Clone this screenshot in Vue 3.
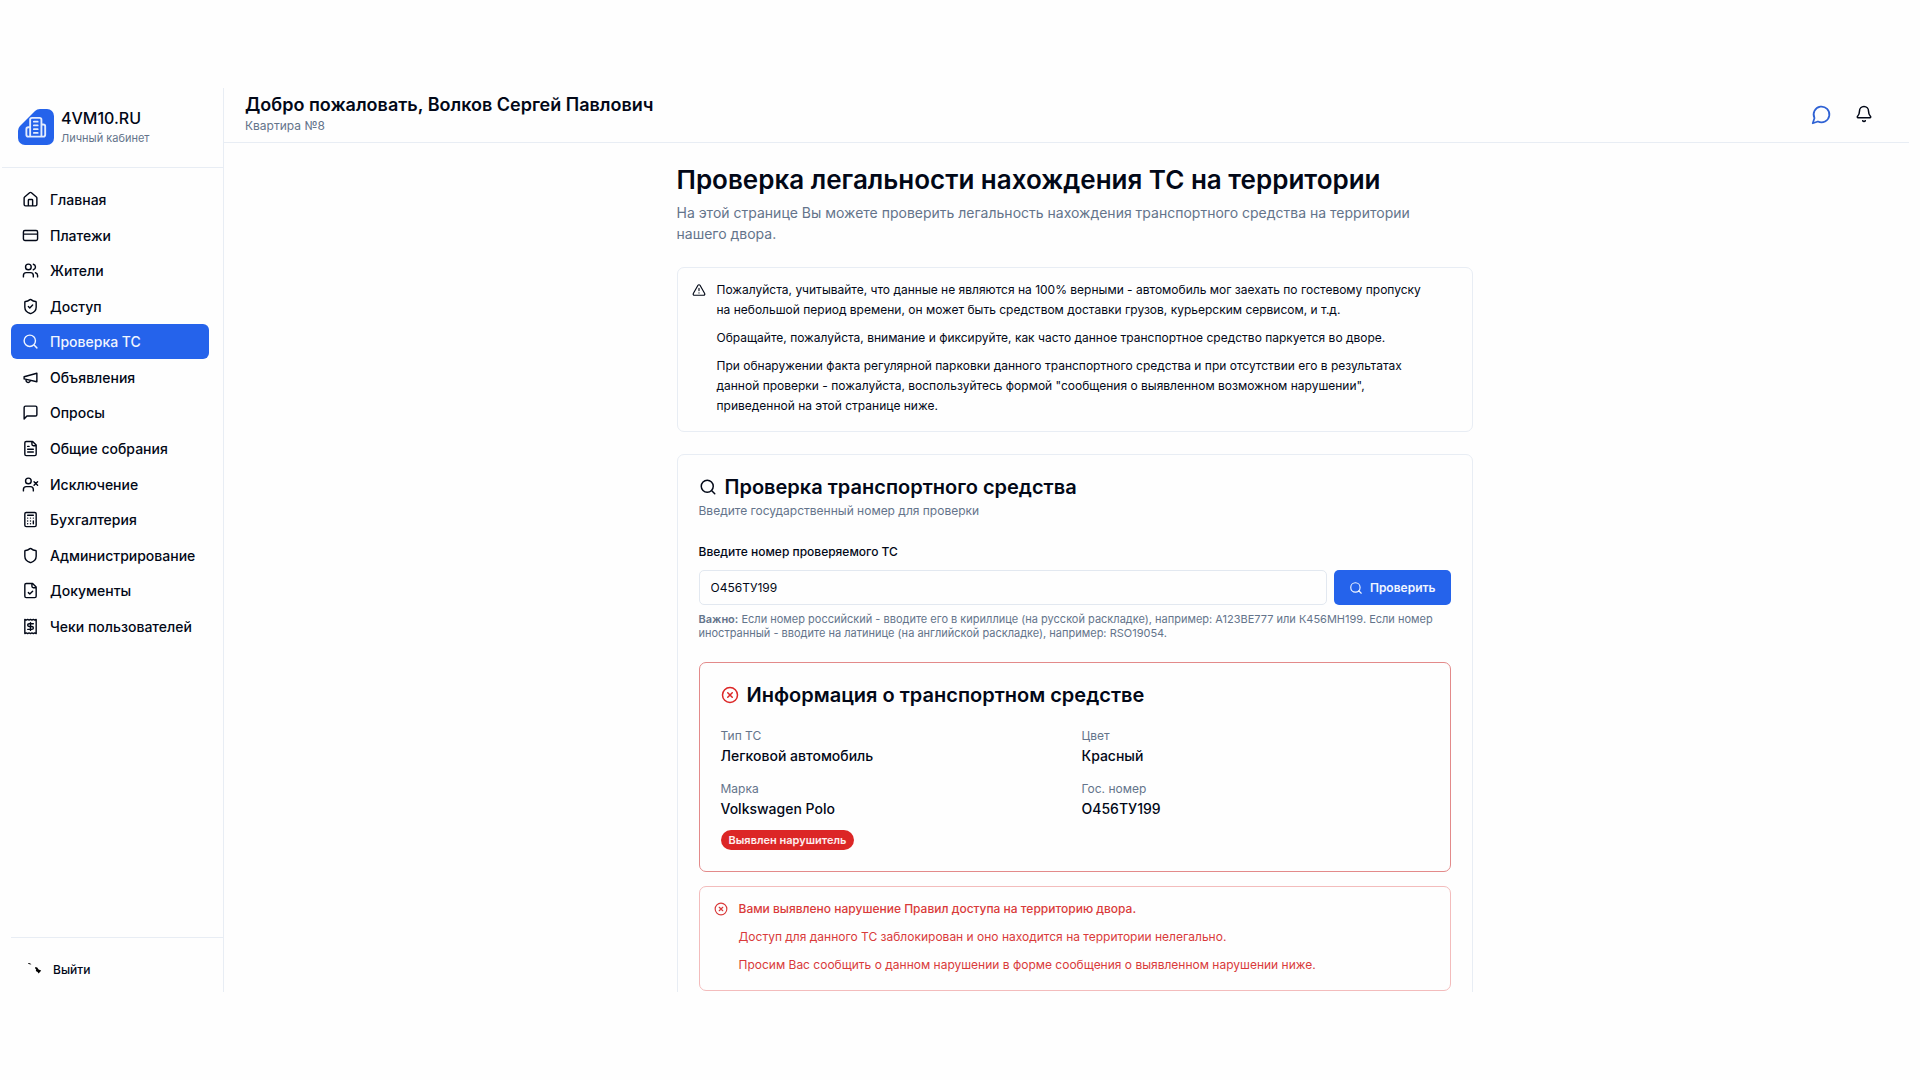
<template>
  <div class="app">
    <aside class="sidebar">
      <div class="brand">
        <svg class="brand-logo" viewBox="0 0 36 36" aria-hidden="true">
          <path class="brand-shape" d="M22 0H29A7 7 0 0 1 36 7V29A7 7 0 0 1 29 36H7A7 7 0 0 1 0 29V22Q0 19 2 17L17 2Q19 0 22 0Z" />
          <g class="brand-glyph" transform="translate(6.500 7) scale(.94)">
            <path :d="icons.building" />
          </g>
        </svg>
        <div>
          <div class="brand-name">4VM10.RU</div>
          <div class="brand-sub">Личный кабинет</div>
        </div>
      </div>

      <nav class="nav">
        <a
          v-for="item in menu"
          :key="item.label"
          href="#"
          class="nav-item"
          :class="{ active: item.label === activeItem }"
          @click.prevent="activeItem = item.label"
        >
          <svg class="icon nav-icon" viewBox="0 0 24 24" aria-hidden="true"><path :d="icons[item.icon]" /></svg>
          {{ item.label }}
        </a>
      </nav>

      <div class="sidebar-footer">
        <button type="button" class="logout">
          <svg class="logout-icon" viewBox="0 0 16 16" aria-hidden="true">
            <path d="M2 1l2 .2 1.500 1.200-2-.2-1.500-.6zM9.200 5l2 .6 1.400 1.800 2.600 1.200-1 1.200-1.600 1.800-1-1.600-1.800-1 .4-1.400-1-1.200z" />
          </svg>
          Выйти
        </button>
      </div>
    </aside>

    <div class="main">
      <header class="topbar">
        <div>
          <div class="welcome">Добро пожаловать, Волков Сергей Павлович</div>
          <div class="flat">Квартира №8</div>
        </div>
        <div class="topbar-actions">
          <button type="button" class="icon-btn chat" aria-label="Сообщения">
            <svg class="icon" viewBox="0 0 24 24"><path :d="icons.chat" /></svg>
          </button>
          <button type="button" class="icon-btn bell" aria-label="Уведомления">
            <svg class="icon" viewBox="0 0 24 24"><path :d="icons.bell" /></svg>
          </button>
        </div>
      </header>

      <main class="content">
        <div class="page">
          <h1>Проверка легальности нахождения ТС на территории</h1>
          <p class="lead">
            На этой странице Вы можете проверить легальность нахождения транспортного средства на территории нашего двора.
          </p>

          <section class="notice">
            <svg class="icon notice-icon" viewBox="0 0 24 24" aria-hidden="true"><path :d="icons.warning" /></svg>
            <div class="notice-text">
              <p v-for="text in notes" :key="text">{{ text }}</p>
            </div>
          </section>

          <section class="card">
            <h2>
              <svg class="icon title-icon" viewBox="0 0 24 24" aria-hidden="true"><path :d="icons.search" /></svg>
              Проверка транспортного средства
            </h2>
            <p class="card-sub">Введите государственный номер для проверки</p>

            <form @submit.prevent>
              <label class="field-label" for="plate">Введите номер проверяемого ТС</label>
              <div class="field-row">
                <input id="plate" v-model="plate" type="text" />
                <button type="submit" class="check-btn">
                  <svg class="icon" viewBox="0 0 24 24" aria-hidden="true"><path :d="icons.search" /></svg>
                  Проверить
                </button>
              </div>
            </form>
            <p class="hint">
              <strong>Важно:</strong> Если номер российский - вводите его в кириллице (на русской раскладке), например:
              А123ВЕ777 или К456МН199. Если номер иностранный - вводите на латинице (на английской раскладке), например: RSO19054.
            </p>

            <div class="result">
              <h2>
                <svg class="icon title-icon danger" viewBox="0 0 24 24" aria-hidden="true"><path :d="icons.cross" /></svg>
                Информация о транспортном средстве
              </h2>
              <dl class="facts">
                <div v-for="fact in facts" :key="fact.label">
                  <dt>{{ fact.label }}</dt>
                  <dd>{{ fact.value }}</dd>
                </div>
              </dl>
              <span class="badge">Выявлен нарушитель</span>
            </div>

            <div class="notice violation">
              <svg class="icon notice-icon" viewBox="0 0 24 24" aria-hidden="true"><path :d="icons.cross" /></svg>
              <div class="notice-text">
                <p class="strong">Вами выявлено нарушение Правил доступа на территорию двора.</p>
                <p>Доступ для данного ТС заблокирован и оно находится на территории нелегально.</p>
                <p>Просим Вас сообщить о данном нарушении в форме сообщения о выявленном нарушении ниже.</p>
              </div>
            </div>
          </section>
        </div>
      </main>
    </div>
  </div>
</template>

<script setup>
import { ref } from 'vue'

const activeItem = ref('Проверка ТС')
const plate = ref('О456ТУ199')

const menu = [
  { label: 'Главная', icon: 'home' },
  { label: 'Платежи', icon: 'card' },
  { label: 'Жители', icon: 'users' },
  { label: 'Доступ', icon: 'shieldCheck' },
  { label: 'Проверка ТС', icon: 'search' },
  { label: 'Объявления', icon: 'megaphone' },
  { label: 'Опросы', icon: 'message' },
  { label: 'Общие собрания', icon: 'fileText' },
  { label: 'Исключение', icon: 'userX' },
  { label: 'Бухгалтерия', icon: 'calculator' },
  { label: 'Администрирование', icon: 'shield' },
  { label: 'Документы', icon: 'fileCheck' },
  { label: 'Чеки пользователей', icon: 'receipt' }
]

const notes = [
  'Пожалуйста, учитывайте, что данные не являются на 100% верными - автомобиль мог заехать по гостевому пропуску на небольшой период времени, он может быть средством доставки грузов, курьерским сервисом, и т.д.',
  'Обращайте, пожалуйста, внимание и фиксируйте, как часто данное транспортное средство паркуется во дворе.',
  'При обнаружении факта регулярной парковки данного транспортного средства и при отсутствии его в результатах данной проверки - пожалуйста, воспользуйтесь формой "сообщения о выявленном возможном нарушении", приведенной на этой странице ниже.'
]

const facts = [
  { label: 'Тип ТС', value: 'Легковой автомобиль' },
  { label: 'Цвет', value: 'Красный' },
  { label: 'Марка', value: 'Volkswagen Polo' },
  { label: 'Гос. номер', value: 'О456ТУ199' }
]

const shieldPath = 'M20 13c0 5-3.5 7.500-7.660 8.950a1 1 0 0 1-.67-.01C7.500 20.500 4 18 4 13V6a1 1 0 0 1 1-1c2 0 4.500-1.200 6.240-2.720a1.170 1.170 0 0 1 1.520 0C14.510 3.810 17 5 19 5a1 1 0 0 1 1 1z'
const filePath = 'M15 2H6a2 2 0 0 0-2 2v16a2 2 0 0 0 2 2h12a2 2 0 0 0 2-2V7zM14 2v4a2 2 0 0 0 2 2h4'

const icons = {
  building: 'M6 22V4a2 2 0 0 1 2-2h8a2 2 0 0 1 2 2v18ZM6 12H4a2 2 0 0 0-2 2v6a2 2 0 0 0 2 2h2M18 9h2a2 2 0 0 1 2 2v9a2 2 0 0 1-2 2h-2M10 6h4M10 10h4M10 14h4M10 18h4',
  home: 'M15 21v-8a1 1 0 0 0-1-1h-4a1 1 0 0 0-1 1v8M3 10a2 2 0 0 1 .709-1.528l7-5.999a2 2 0 0 1 2.582 0l7 5.999A2 2 0 0 1 21 10v9a2 2 0 0 1-2 2H5a2 2 0 0 1-2-2z',
  card: 'M4 5h16a2 2 0 0 1 2 2v10a2 2 0 0 1-2 2H4a2 2 0 0 1-2-2V7a2 2 0 0 1 2-2zM2 10h20',
  users: 'M16 21v-2a4 4 0 0 0-4-4H6a4 4 0 0 0-4 4v2M13 7a4 4 0 1 1-8 0a4 4 0 1 1 8 0M22 21v-2a4 4 0 0 0-3-3.870M16 3.130a4 4 0 0 1 0 7.750',
  shield: shieldPath,
  shieldCheck: shieldPath + 'M9 12l2 2 4-4',
  search: 'M19 11a8 8 0 1 1-16 0a8 8 0 1 1 16 0M21 21l-4.300-4.300',
  megaphone: 'M3 11l18-5v12L3 14v-3zM11.600 16.800a3 3 0 1 1-5.800-1.600',
  message: 'M21 15a2 2 0 0 1-2 2H7l-4 4V5a2 2 0 0 1 2-2h14a2 2 0 0 1 2 2z',
  fileText: filePath + 'M10 9H8M16 13H8M16 17H8',
  userX: 'M16 21v-2a4 4 0 0 0-4-4H6a4 4 0 0 0-4 4v2M13 7a4 4 0 1 1-8 0a4 4 0 1 1 8 0M17 8l5 5M22 8l-5 5',
  calculator: 'M6 2h12a2 2 0 0 1 2 2v16a2 2 0 0 1-2 2H6a2 2 0 0 1-2-2V4a2 2 0 0 1 2-2zM8 6h8M16 14v4M16 10h.01M12 10h.01M8 10h.01M12 14h.01M8 14h.01M12 18h.01M8 18h.01',
  fileCheck: filePath + 'M9 15l2 2 4-4',
  receipt: 'M4 2v20l2-1 2 1 2-1 2 1 2-1 2 1 2-1 2 1V2l-2 1-2-1-2 1-2-1-2 1-2-1-2 1ZM16 8h-6a2 2 0 1 0 0 4h4a2 2 0 1 1 0 4H8M12 17.500v-11',
  chat: 'M7.900 20A9 9 0 1 0 4 16.100L2 22Z',
  bell: 'M10.268 21a2 2 0 0 0 3.464 0M3.262 15.326A1 1 0 0 0 4 17h16a1 1 0 0 0 .74-1.673C19.410 13.956 18 12.499 18 8A6 6 0 0 0 6 8c0 4.499-1.411 5.956-2.738 7.326',
  warning: 'M21.730 18l-8-14a2 2 0 0 0-3.480 0l-8 14A2 2 0 0 0 4 21h16a2 2 0 0 0 1.730-3M12 9v4M12 17h.01',
  cross: 'M22 12a10 10 0 1 1-20 0a10 10 0 1 1 20 0M15 9l-6 6M9 9l6 6'
}
</script>

<style>
body {
  margin: 0;
  background: #fefefe;
}
</style>

<style scoped>
.app {
  display: flex;
  height: 100vh;
  padding: 88px 11px 88px 0;
  box-sizing: border-box;
  font-family: Inter, "Liberation Sans", sans-serif;
  color: #020817;
}

h1,
h2,
p,
dl,
dd {
  margin: 0;
}

button,
input {
  font-family: inherit;
}

button {
  border: none;
  background: none;
  padding: 0;
  cursor: pointer;
}

.icon {
  fill: none;
  stroke: currentColor;
  stroke-width: 2;
  stroke-linecap: round;
  stroke-linejoin: round;
  flex-shrink: 0;
}

/* Sidebar */
.sidebar {
  display: flex;
  flex-direction: column;
  width: 224px;
  flex-shrink: 0;
  box-sizing: border-box;
  border-right: 1px solid #e8edf4;
}

.brand {
  display: flex;
  align-items: center;
  gap: 7px;
  height: 80px;
  box-sizing: border-box;
  margin-left: 2px;
  padding: 0 16px 2px;
  border-bottom: 1px solid #e8edf4;
}

.brand-logo {
  width: 36px;
  height: 36px;
}

.brand-shape {
  fill: #2563eb;
}

.brand-glyph {
  fill: none;
  stroke: #e3ecfd;
  stroke-width: 2;
  stroke-linecap: round;
  stroke-linejoin: round;
}

.brand-name {
  font-size: 16px;
  line-height: 22px;
  font-weight: 500;
}

.brand-sub {
  font-size: 11px;
  line-height: 18px;
  color: #64748b;
}

.nav {
  display: flex;
  flex-direction: column;
  justify-content: space-between;
  min-height: 462px;
  padding: 14px 14px 0 11px;
}

.nav-item {
  display: flex;
  align-items: center;
  gap: 11px;
  height: 35px;
  padding: 0 11px;
  border-radius: 6px;
  font-size: 14px;
  font-weight: 500;
  color: inherit;
  text-decoration: none;
  white-space: nowrap;
}

.nav-item.active {
  background: #2563eb;
  color: #f0f5ff;
}

.nav-icon {
  width: 17px;
  height: 17px;
}

.sidebar-footer {
  margin: auto 0 0 11px;
  padding: 14px 0 5px;
  border-top: 1px solid #e8edf4;
}

.logout {
  display: flex;
  align-items: center;
  gap: 11px;
  height: 35px;
  padding: 0 15px;
  font-size: 12px;
  font-weight: 500;
  color: #020817;
}

.logout-icon {
  width: 16px;
  height: 16px;
}

/* Top bar */
.main {
  display: flex;
  flex-direction: column;
  flex: 1;
  min-width: 0;
}

.topbar {
  display: flex;
  justify-content: space-between;
  align-items: center;
  height: 55px;
  box-sizing: border-box;
  flex-shrink: 0;
  padding: 0 36px 2px 21px;
  border-bottom: 1px solid #e8edf4;
}

.welcome {
  font-size: 18px;
  line-height: 24px;
  font-weight: 600;
}

.flat {
  font-size: 12px;
  line-height: 18px;
  color: #64748b;
}

.topbar-actions {
  display: flex;
  align-items: center;
  gap: 23px;
}

.icon-btn {
  display: flex;
}

.icon-btn svg {
  width: 18px;
  height: 18px;
}

.chat {
  color: #2f62d4;
}

.chat svg {
  width: 21px;
  height: 21px;
}

.bell {
  color: #020817;
}

/* Page */
.content {
  flex: 1;
  min-height: 0;
  overflow: hidden;
  padding: 21px 0 0 16px;
}

.page {
  max-width: 796px;
  margin: 0 auto;
}

h1 {
  font-size: 26px;
  line-height: 32px;
  font-weight: 600;
}

.lead {
  margin-top: 6px;
  padding-right: 36px;
  font-size: 14px;
  line-height: 21px;
  color: #64748b;
}

.notice {
  display: flex;
  gap: 11px;
  margin-top: 23px;
  padding: 12px 22px 15px 14px;
  border: 1px solid #e8edf4;
  border-radius: 7px;
}

.notice-icon {
  width: 14px;
  height: 14px;
  margin-top: 3px;
}

.notice-text {
  display: flex;
  flex-direction: column;
  gap: 8px;
  max-width: 715px;
  font-size: 12px;
  line-height: 20px;
}

.card {
  margin-top: 22px;
  padding: 20px 21px 21px;
  border: 1px solid #e8edf4;
  border-radius: 7px;
}

h2 {
  display: flex;
  align-items: center;
  gap: 8px;
  font-size: 20px;
  line-height: 24px;
  font-weight: 600;
}

.title-icon {
  width: 18px;
  height: 18px;
}

.danger {
  color: #dc2626;
}

.card-sub {
  margin-top: 3px;
  font-size: 12px;
  line-height: 18px;
  color: #64748b;
}

.field-label {
  display: block;
  margin-top: 23px;
  font-size: 12px;
  line-height: 18px;
  font-weight: 500;
}

.field-row {
  display: flex;
  gap: 7px;
  margin-top: 9px;
}

.field-row input {
  flex: 1;
  min-width: 0;
  height: 35px;
  box-sizing: border-box;
  padding: 0 11px;
  border: 1px solid #e2e8f0;
  border-radius: 5px;
  background: #fefefe;
  font-size: 12px;
  color: #020817;
}

.check-btn {
  display: flex;
  align-items: center;
  justify-content: center;
  gap: 7px;
  height: 35px;
  padding: 0 15px;
  border-radius: 5px;
  background: #2563eb;
  font-size: 12px;
  font-weight: 600;
  color: #f0f5ff;
}

.check-btn svg {
  width: 14px;
  height: 14px;
}

.hint {
  margin-top: 7px;
  font-size: 11px;
  line-height: 14px;
  color: #64748b;
}

.hint strong {
  font-weight: 600;
}

.result {
  margin-top: 22px;
  padding: 20px 21px 21px;
  border: 1px solid #e38a8a;
  border-radius: 7px;
}

.facts {
  display: grid;
  grid-template-columns: 1fr 1fr;
  gap: 14px;
  margin-top: 20px;
}

.facts dt {
  font-size: 12px;
  line-height: 18px;
  color: #64748b;
}

.facts dd {
  font-size: 14px;
  line-height: 21px;
  font-weight: 500;
}

.badge {
  display: block;
  width: fit-content;
  margin-top: 11px;
  padding: 0 8px;
  border-radius: 10px;
  background: #dc2626;
  font-size: 11px;
  line-height: 20px;
  font-weight: 600;
  color: #fdeeee;
}

.violation {
  margin-top: 14px;
  border-color: #f3bcbc;
  color: #d93a3a;
}

.strong {
  font-weight: 500;
}
</style>
